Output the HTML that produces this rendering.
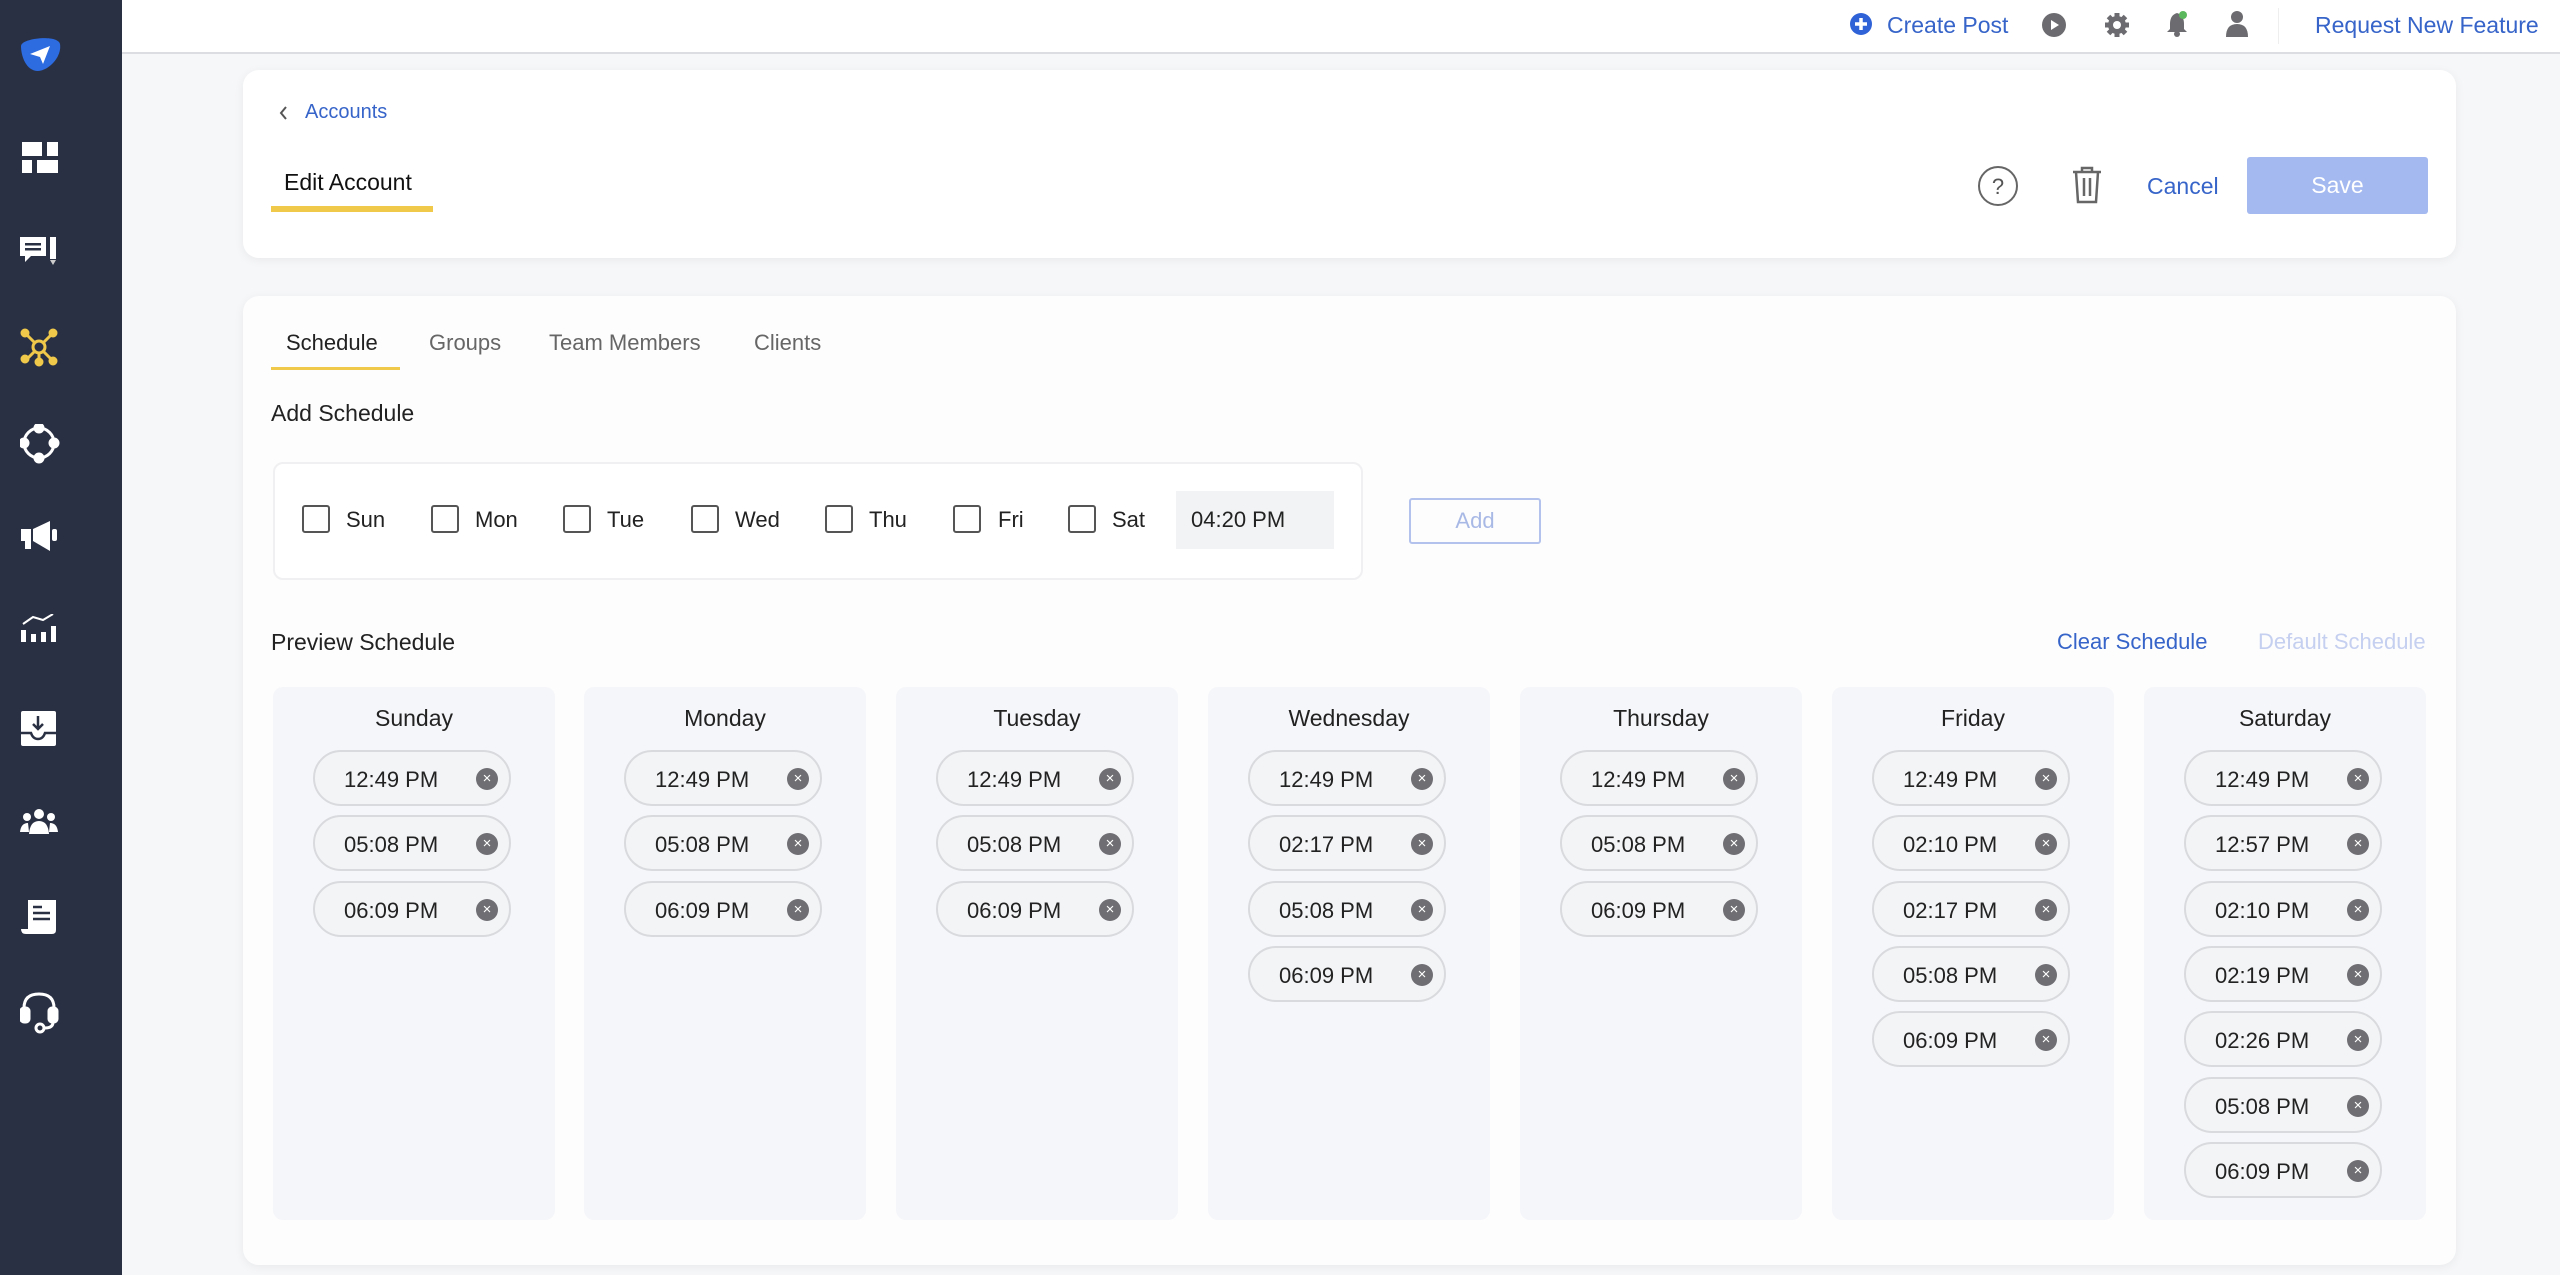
<!DOCTYPE html>
<html><head><meta charset="utf-8"><style>
*{box-sizing:border-box;margin:0;padding:0}
body{width:2560px;height:1275px;overflow:hidden;background:#f6f7f9;font-family:"Liberation Sans",sans-serif;color:#222;position:relative}
.abs{position:absolute}
.side{left:0;top:0;width:122px;height:1275px;background:#2a3043}
.top{left:122px;top:0;width:2438px;height:54px;background:#fff;border-bottom:2px solid #dcdde2}
.blue{color:#3664c9}
.card{background:#fff;border-radius:16px;box-shadow:0 2px 10px rgba(0,0,0,0.06)}
.t22{font-size:22px;white-space:nowrap}
.cb{width:28px;height:28px;border:2px solid #555;border-radius:3px;background:#fff}
.col{width:282px;height:533px;background:#f5f6f9;border-radius:10px;top:687px}
.col .ttl{position:absolute;top:18px;left:0;width:100%;text-align:center;font-size:23px;color:#222}
.pill{position:absolute;left:40px;width:198px;height:56px;border:2px solid #d9dadd;border-radius:28px;background:#f3f4f6}
.pill span{position:absolute;left:29px;top:15px;font-size:22px;color:#222}
.pill i{position:absolute;left:161px;top:16px;width:22px;height:22px;border-radius:50%;background:#6f6f73;color:#fff;font-style:normal;font-size:15px;line-height:22px;text-align:center}
</style></head><body>
<div class="abs side">
<svg class="abs" style="left:18px;top:36px" width="44" height="36" viewBox="0 0 44 36"><path d="M3 10 C3 2 40 -2 42 8 C44 20 32 34 20 35 C8 35 3 20 3 10Z" fill="#2c6be0"/><path d="M12 18 L32 10 L25 28 L22 21 Z" fill="#fff"/></svg>
<svg class="abs" style="left:22px;top:142px" width="36" height="32"><rect x="0" y="0" width="20" height="14" fill="#fff"/><rect x="25" y="0" width="11" height="14" fill="#fff"/><rect x="0" y="18" width="10" height="13" fill="#fff"/><rect x="15" y="18" width="21" height="13" fill="#fff"/></svg>
<svg class="abs" style="left:20px;top:237px" width="40" height="30"><path d="M0 0 H26 V19 H11 L5 25 V19 H0Z" fill="#fff"/><rect x="5" y="6" width="16" height="2.5" fill="#2a3043"/><rect x="5" y="11" width="16" height="2.5" fill="#2a3043"/><rect x="30" y="0" width="6" height="22" fill="#fff"/><path d="M30 23 H36 L33 28Z" fill="#ccc"/></svg>
<svg class="abs" style="left:20px;top:328px" width="40" height="40" viewBox="0 0 40 40" fill="none" stroke="#f0c94a" stroke-width="3"><circle cx="19" cy="19" r="6"/><path d="M5 5 L14 14 M33 5 L24 14 M5 33 L14 24 M33 33 L24 24 M19 25 V34"/><g fill="#f0c94a"><circle cx="5" cy="5" r="3"/><circle cx="33" cy="5" r="3"/><circle cx="5" cy="31" r="3"/><circle cx="33" cy="33" r="3"/><circle cx="19" cy="34" r="3"/></g></svg>
<svg class="abs" style="left:20px;top:424px" width="40" height="40" fill="none" stroke="#fff" stroke-width="3"><circle cx="19" cy="19" r="15"/><g fill="#fff"><circle cx="19" cy="4" r="4"/><circle cx="19" cy="34" r="4"/><circle cx="4" cy="19" r="4"/><circle cx="34" cy="19" r="4"/></g></svg>
<svg class="abs" style="left:20px;top:520px" width="40" height="36"><rect x="1" y="9" width="10" height="12" fill="#fff"/><rect x="5" y="21" width="6" height="8" fill="#fff"/><path d="M13 9 L30 1 V31 L13 21Z" fill="#fff"/><rect x="32" y="9" width="5" height="12" rx="2" fill="#fff"/></svg>
<svg class="abs" style="left:20px;top:614px" width="40" height="36" fill="none" stroke="#fff"><g fill="#fff" stroke="none"><rect x="1" y="16" width="5" height="12"/><rect x="11" y="20" width="5" height="8"/><rect x="21" y="18" width="5" height="10"/><rect x="31" y="12" width="5" height="16"/></g><path d="M3 10 L13 3 L23 6 L33 0" stroke-width="2"/></svg>
<svg class="abs" style="left:20px;top:710px" width="40" height="36"><rect x="1" y="1" width="35" height="35" rx="2" fill="#fff"/><path d="M18 6 V19 M13 14 L18 19 L23 14" stroke="#2a3043" stroke-width="2.5" fill="none"/><path d="M1 23 H11 Q13 29 18 29 Q23 29 25 23 H36" stroke="#2a3043" stroke-width="2.5" fill="none"/></svg>
<svg class="abs" style="left:20px;top:808px" width="40" height="30" fill="#fff"><circle cx="19" cy="6" r="5"/><circle cx="7" cy="9" r="4"/><circle cx="31" cy="9" r="4"/><path d="M9 26 Q10 13 19 13 Q28 13 29 26Z"/><path d="M0 24 Q1 15 8 15 L9 24Z"/><path d="M38 24 Q37 15 30 15 L29 24Z"/></svg>
<svg class="abs" style="left:20px;top:898px" width="40" height="40"><path d="M8 2 H36 V32 Q36 36 32 36 H6 Q1 36 1 31 H8Z" fill="#fff"/><g stroke="#2a3043" stroke-width="2.5"><path d="M13 9 H22 M13 15 H30 M13 21 H30"/></g></svg>
<svg class="abs" style="left:20px;top:990px" width="40" height="44" fill="none" stroke="#fff" stroke-width="3"><path d="M4 24 V18 Q4 4 19 4 Q34 4 34 18 V24"/><rect x="1" y="18" width="8" height="14" rx="3" fill="#fff"/><rect x="29" y="18" width="8" height="14" rx="3" fill="#fff"/><path d="M33 32 Q33 38 25 38"/><circle cx="20" cy="38" r="4"/></svg>
</div>
<div class="abs top"></div>
<svg class="abs" style="left:1850px;top:13px" width="22" height="22"><circle cx="11" cy="11" r="11" fill="#2f62d6"/><path d="M11 5 V17 M5 11 H17" stroke="#fff" stroke-width="3.5"/></svg>
<div class="abs t22 blue" style="left:1887px;top:12px;font-size:23px">Create Post</div>
<svg class="abs" style="left:2042px;top:13px" width="24" height="24"><circle cx="12" cy="12" r="12" fill="#6c6c70"/><path d="M9 7 L17 12 L9 17Z" fill="#fff"/></svg>
<svg class="abs" style="left:2104px;top:12px" width="26" height="26" viewBox="0 0 26 26"><circle cx="13" cy="13" r="9" fill="#6c6c70"/><g stroke="#6c6c70" stroke-width="5"><path d="M13 1 V25 M1 13 H25 M4.5 4.5 L21.5 21.5 M21.5 4.5 L4.5 21.5"/></g><circle cx="13" cy="13" r="4" fill="#fff"/></svg>
<svg class="abs" style="left:2165px;top:10px" width="26" height="28"><path d="M12 3 Q5 5 5 14 V19 L2 22 H22 L19 19 V14 Q19 5 12 3Z" fill="#6c6c70"/><circle cx="12" cy="24" r="3" fill="#6c6c70"/><circle cx="18" cy="5" r="4" fill="#5cb85c"/></svg>
<svg class="abs" style="left:2225px;top:10px" width="24" height="28" fill="#6c6c70"><circle cx="12" cy="7" r="6"/><path d="M1 27 Q1 14 12 14 Q23 14 23 27Z"/></svg>
<div class="abs" style="left:2278px;top:8px;width:1px;height:36px;background:#eee"></div>
<div class="abs t22 blue" style="left:2315px;top:12px;font-size:23px">Request New Feature</div>

<div class="abs card" style="left:243px;top:70px;width:2213px;height:188px"></div>
<svg class="abs" style="left:278px;top:105px" width="12" height="16" fill="none" stroke="#555" stroke-width="2"><path d="M8 2 L3 8 L8 14"/></svg>
<div class="abs blue" style="left:305px;top:101px;font-size:20px">Accounts</div>
<div class="abs" style="left:284px;top:169px;font-size:23px;color:#111">Edit Account</div>
<div class="abs" style="left:271px;top:206px;width:162px;height:6px;background:#f0c94a"></div>
<svg class="abs" style="left:1977px;top:165px" width="42" height="42" fill="none" stroke="#666" stroke-width="2"><circle cx="21" cy="21" r="19"/><text x="21" y="29" text-anchor="middle" font-size="22" fill="#555" stroke="none" font-family="Liberation Sans">?</text></svg>
<svg class="abs" style="left:2071px;top:165px" width="32" height="40" fill="none" stroke="#666" stroke-width="2.5"><path d="M2 7 H30 M11 7 V3 H21 V7 M5 7 L7 37 H25 L27 7 M13 13 V31 M19 13 V31"/></svg>
<div class="abs t22 blue" style="left:2147px;top:173px;font-size:23px">Cancel</div>
<div class="abs" style="left:2247px;top:157px;width:181px;height:57px;background:#a4b9ef;border-radius:3px;color:#fff;font-size:23px;text-align:center;line-height:57px">Save</div>

<div class="abs card" style="left:243px;top:296px;width:2213px;height:969px;background:#fdfdfd"></div>
<div class="abs t22" style="left:286px;top:330px;color:#222">Schedule</div>
<div class="abs t22" style="left:429px;top:330px;color:#666">Groups</div>
<div class="abs t22" style="left:549px;top:330px;color:#666">Team Members</div>
<div class="abs t22" style="left:754px;top:330px;color:#666">Clients</div>
<div class="abs" style="left:271px;top:367px;width:129px;height:3px;background:#f0c94a"></div>
<div class="abs t22" style="left:271px;top:400px;font-size:23px">Add Schedule</div>
<div class="abs" style="left:273px;top:462px;width:1090px;height:118px;background:#fff;border:2px solid #f0f0f2;border-radius:10px"></div>
<div class="abs cb" style="left:302px;top:505px"></div><div class="abs t22" style="left:346px;top:507px">Sun</div>
<div class="abs cb" style="left:431px;top:505px"></div><div class="abs t22" style="left:475px;top:507px">Mon</div>
<div class="abs cb" style="left:563px;top:505px"></div><div class="abs t22" style="left:607px;top:507px">Tue</div>
<div class="abs cb" style="left:691px;top:505px"></div><div class="abs t22" style="left:735px;top:507px">Wed</div>
<div class="abs cb" style="left:825px;top:505px"></div><div class="abs t22" style="left:869px;top:507px">Thu</div>
<div class="abs cb" style="left:953px;top:505px"></div><div class="abs t22" style="left:998px;top:507px">Fri</div>
<div class="abs cb" style="left:1068px;top:505px"></div><div class="abs t22" style="left:1112px;top:507px">Sat</div>
<div class="abs" style="left:1176px;top:491px;width:158px;height:58px;background:#f2f3f5"></div>
<div class="abs t22" style="left:1191px;top:507px">04:20 PM</div>
<div class="abs" style="left:1409px;top:498px;width:132px;height:46px;border:2px solid #b3c2ec;border-radius:3px;color:#a9b9e6;font-size:22px;text-align:center;line-height:42px">Add</div>
<div class="abs t22" style="left:271px;top:629px;font-size:23px">Preview Schedule</div>
<div class="abs t22 blue" style="left:2057px;top:629px">Clear Schedule</div>
<div class="abs t22" style="left:2258px;top:629px;color:#c5cff0">Default Schedule</div>

<div class="abs col" style="left:273px"><div class="ttl">Sunday</div>
<div class="pill" style="top:63px"><span>12:49 PM</span><i>×</i></div><div class="pill" style="top:128px"><span>05:08 PM</span><i>×</i></div><div class="pill" style="top:194px"><span>06:09 PM</span><i>×</i></div></div>
<div class="abs col" style="left:584px"><div class="ttl">Monday</div>
<div class="pill" style="top:63px"><span>12:49 PM</span><i>×</i></div><div class="pill" style="top:128px"><span>05:08 PM</span><i>×</i></div><div class="pill" style="top:194px"><span>06:09 PM</span><i>×</i></div></div>
<div class="abs col" style="left:896px"><div class="ttl">Tuesday</div>
<div class="pill" style="top:63px"><span>12:49 PM</span><i>×</i></div><div class="pill" style="top:128px"><span>05:08 PM</span><i>×</i></div><div class="pill" style="top:194px"><span>06:09 PM</span><i>×</i></div></div>
<div class="abs col" style="left:1208px"><div class="ttl">Wednesday</div>
<div class="pill" style="top:63px"><span>12:49 PM</span><i>×</i></div><div class="pill" style="top:128px"><span>02:17 PM</span><i>×</i></div><div class="pill" style="top:194px"><span>05:08 PM</span><i>×</i></div><div class="pill" style="top:259px"><span>06:09 PM</span><i>×</i></div></div>
<div class="abs col" style="left:1520px"><div class="ttl">Thursday</div>
<div class="pill" style="top:63px"><span>12:49 PM</span><i>×</i></div><div class="pill" style="top:128px"><span>05:08 PM</span><i>×</i></div><div class="pill" style="top:194px"><span>06:09 PM</span><i>×</i></div></div>
<div class="abs col" style="left:1832px"><div class="ttl">Friday</div>
<div class="pill" style="top:63px"><span>12:49 PM</span><i>×</i></div><div class="pill" style="top:128px"><span>02:10 PM</span><i>×</i></div><div class="pill" style="top:194px"><span>02:17 PM</span><i>×</i></div><div class="pill" style="top:259px"><span>05:08 PM</span><i>×</i></div><div class="pill" style="top:324px"><span>06:09 PM</span><i>×</i></div></div>
<div class="abs col" style="left:2144px"><div class="ttl">Saturday</div>
<div class="pill" style="top:63px"><span>12:49 PM</span><i>×</i></div><div class="pill" style="top:128px"><span>12:57 PM</span><i>×</i></div><div class="pill" style="top:194px"><span>02:10 PM</span><i>×</i></div><div class="pill" style="top:259px"><span>02:19 PM</span><i>×</i></div><div class="pill" style="top:324px"><span>02:26 PM</span><i>×</i></div><div class="pill" style="top:390px"><span>05:08 PM</span><i>×</i></div><div class="pill" style="top:455px"><span>06:09 PM</span><i>×</i></div></div>
</body></html>
